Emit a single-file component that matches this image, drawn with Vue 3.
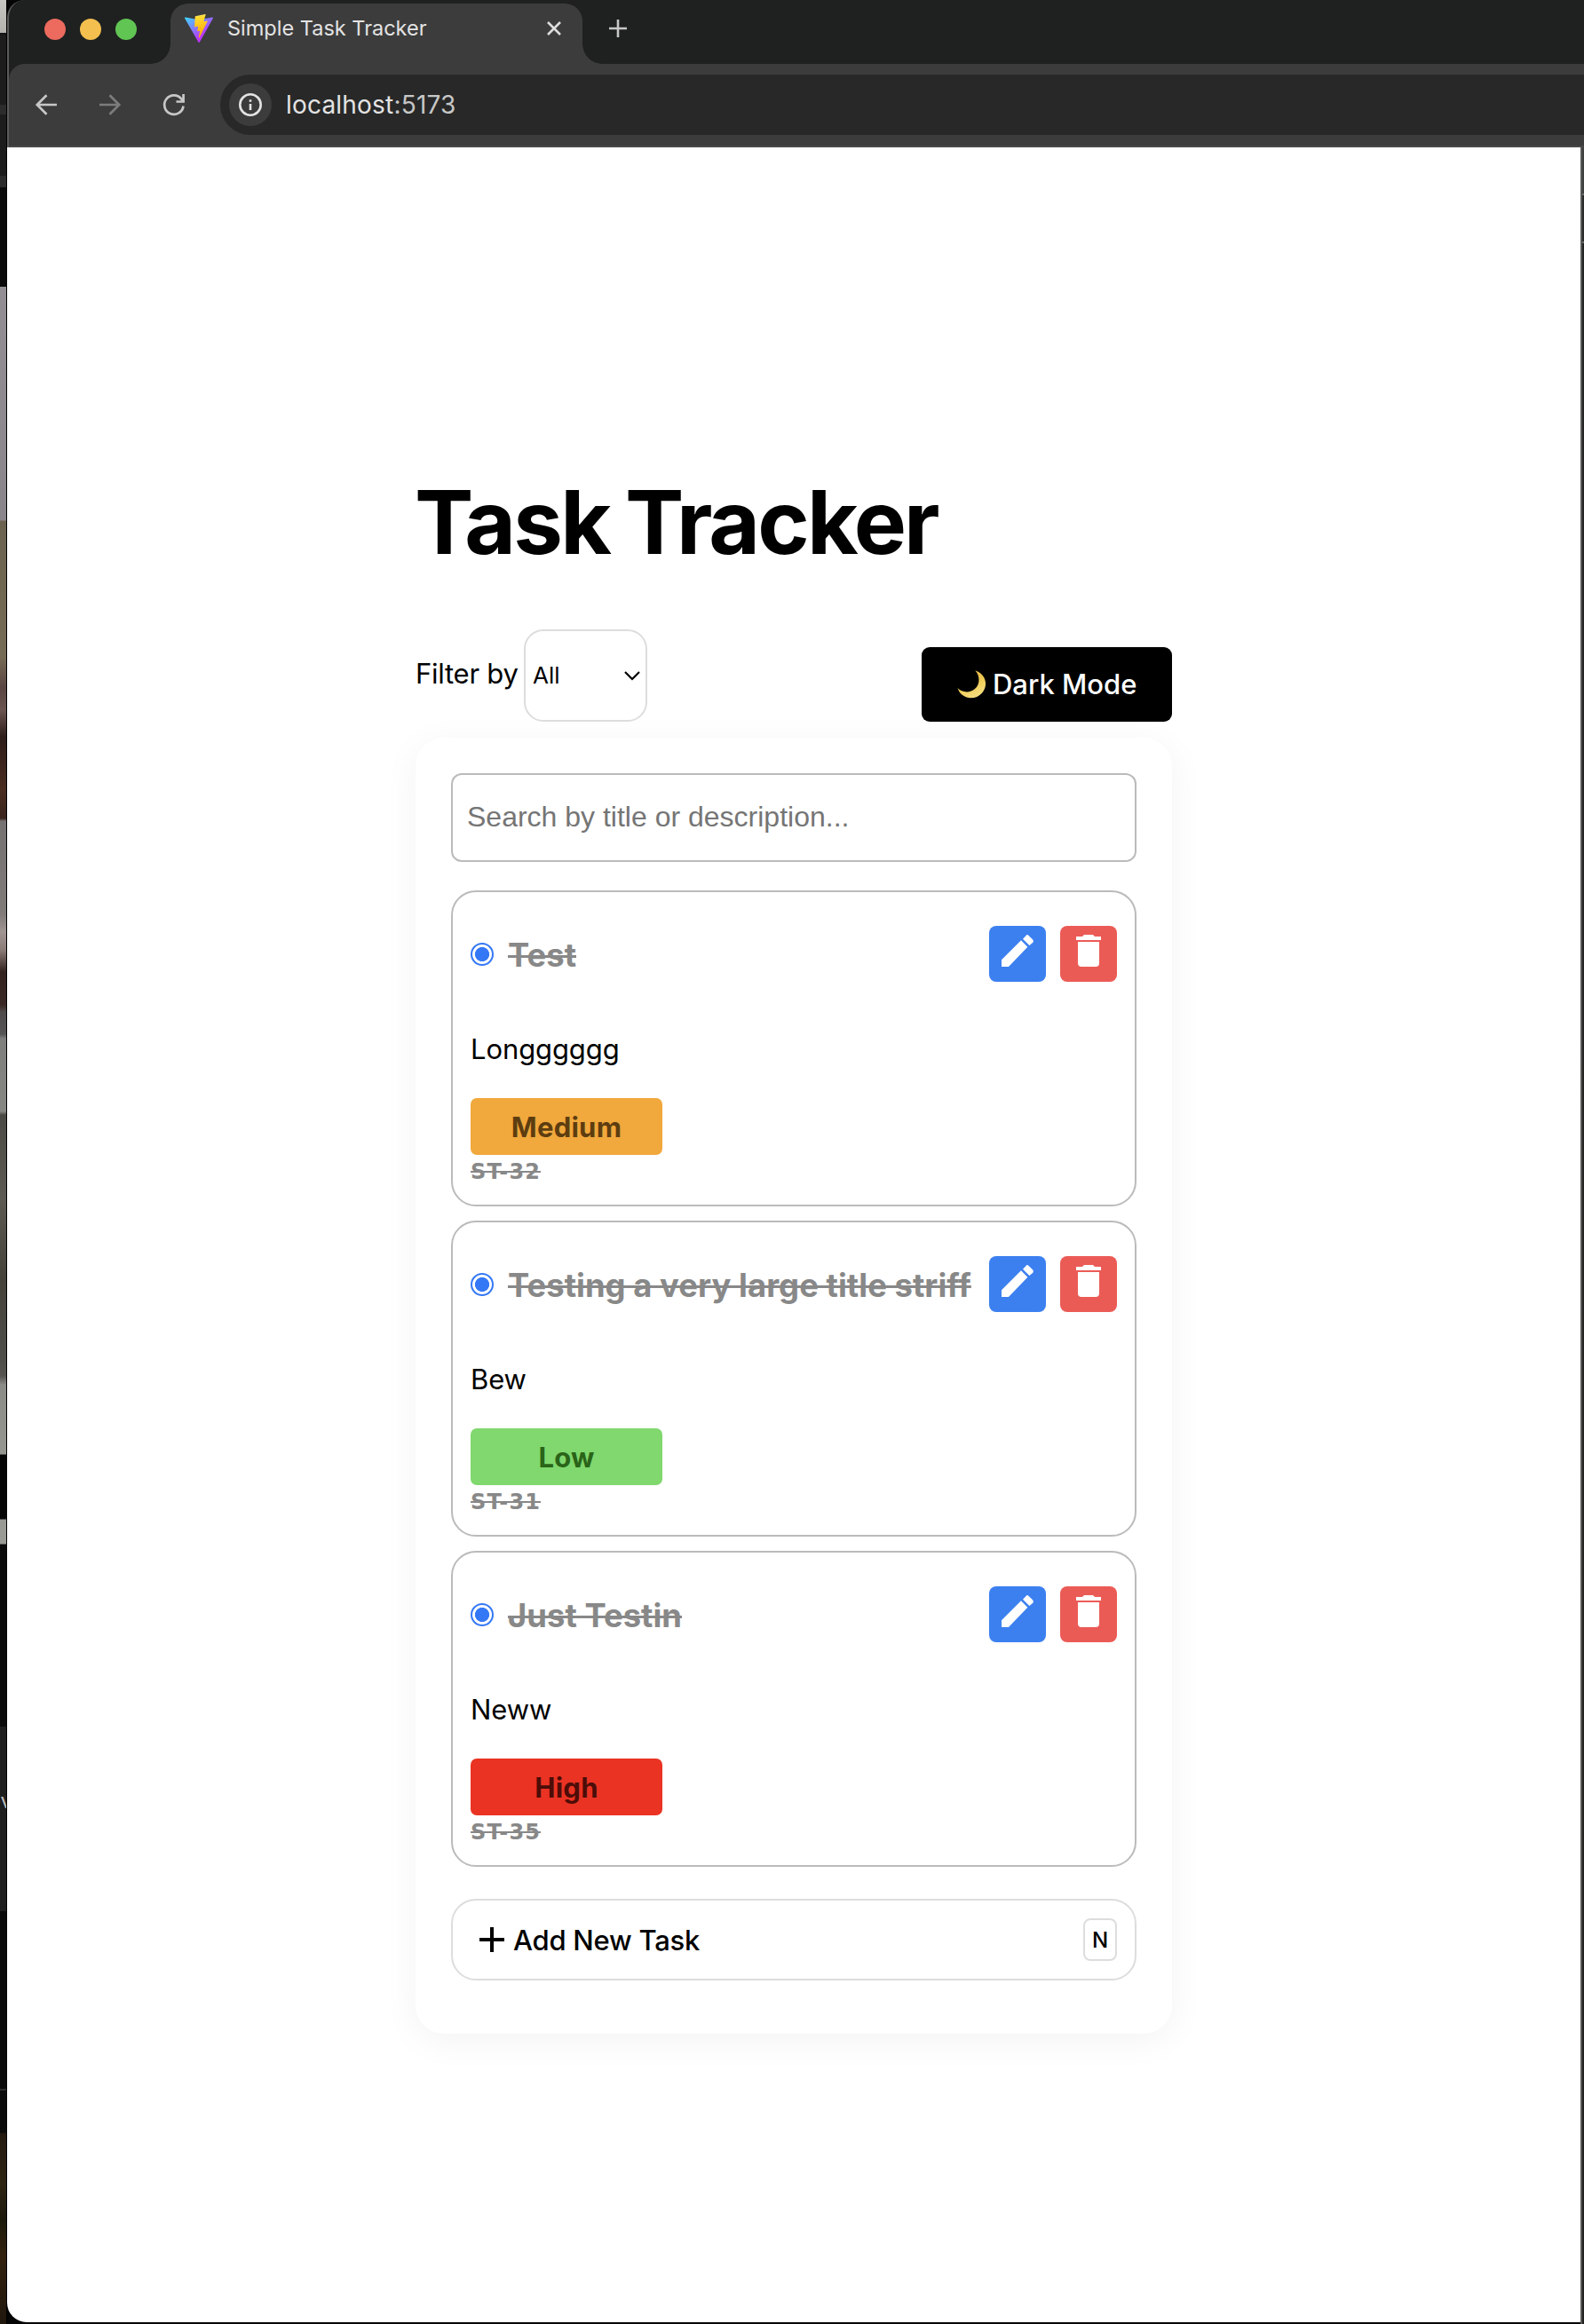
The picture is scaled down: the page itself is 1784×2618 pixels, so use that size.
<script setup>
import { ref } from 'vue'

const query = ref('')
const tasks = [
  { id: 'ST-32', title: 'Test', description: 'Longggggg', priority: 'Medium' },
  { id: 'ST-31', title: 'Testing a very large title striff', description: 'Bew', priority: 'Low' },
  { id: 'ST-35', title: 'Just Testin', description: 'Neww', priority: 'High' },
]
</script>

<template>
  <div class="desktop">
    <div class="backdrop-left"><span class="behind">ev</span></div>
    <div class="window">
      <header class="chrome">
        <div class="tabbar">
          <div class="lights"><i class="red"></i><i class="amber"></i><i class="green"></i></div>
          <div class="tab">
            <svg class="favicon" viewBox="0 0 256 257">
              <defs>
                <linearGradient id="vl" x1="-.8%" x2="57.6%" y1="7.7%" y2="78.4%">
                  <stop offset="0" stop-color="#41d1ff" /><stop offset="1" stop-color="#bd34fe" />
                </linearGradient>
                <linearGradient id="vb" x1="43.4%" x2="50.3%" y1="2.2%" y2="89%">
                  <stop offset="0" stop-color="#ffea83" /><stop offset=".08" stop-color="#ffdd35" /><stop offset="1" stop-color="#ffa800" />
                </linearGradient>
              </defs>
              <path fill="url(#vl)" d="M255.153 37.938L134.897 252.976c-2.483 4.44-8.862 4.466-11.382.048L.875 37.958c-2.746-4.814 1.371-10.646 6.827-9.67l120.385 21.517a6.537 6.537 0 0 0 2.322-.004l117.867-21.483c5.438-.991 9.574 4.796 6.877 9.62Z" />
              <path fill="url(#vb)" d="M185.432.063L96.44 17.501a3.268 3.268 0 0 0-2.634 3.014l-5.474 92.456a3.268 3.268 0 0 0 3.997 3.378l24.777-5.718c2.318-.535 4.413 1.507 3.936 3.838l-7.361 36.047c-.495 2.426 1.782 4.5 4.151 3.78l15.304-4.649c2.372-.72 4.652 1.36 4.15 3.788l-11.698 56.621c-.732 3.542 3.979 5.473 5.943 2.437l1.313-2.028l72.516-144.72c1.215-2.423-.88-5.186-3.54-4.672l-25.505 4.922c-2.396.462-4.435-1.77-3.759-4.114l16.646-57.705c.677-2.35-1.37-4.583-3.769-4.113Z" />
            </svg>
            <span class="tab-title">Simple Task Tracker</span>
            <svg class="close" viewBox="0 0 16 16"><path d="M1 1l14 14M15 1L1 15" /></svg>
          </div>
          <svg class="newtab" viewBox="0 0 20 20"><path d="M10 0v20M0 10h20" /></svg>
        </div>
        <div class="toolbar">
          <svg class="nav" viewBox="0 0 24 24"><path d="M24 12H2M12.5 1.2L1.8 12l10.700 10.800" /></svg>
          <svg class="nav dim" viewBox="0 0 24 24"><path d="M0 12h22M11.500 1.200L22.200 12L11.500 22.800" /></svg>
          <svg class="nav" viewBox="0 0 24 24"><path d="M22.500 13.500A10.700 10.700 0 1 1 20.500 5.800L22.500 8.300M22.600 0v8.500H14.500" /></svg>
          <div class="address">
            <span class="site-info">
              <svg viewBox="0 0 26 26"><circle cx="13" cy="13" r="11.700" /><path d="M13 12v7M13 7.200v2.500" /></svg>
            </span>
            <span class="url">localhost<span class="port">:5173</span></span>
          </div>
        </div>
      </header>

      <div class="viewport">
        <main class="page">
          <div class="app">
            <h1>Task Tracker</h1>
            <div class="controls">
              <label class="filter">
                <span>Filter by</span>
                <span class="select">
                  <span>All</span>
                  <svg viewBox="0 0 18 10"><path d="M1 1l8 8 8-8" /></svg>
                </span>
              </label>
              <button class="theme">
                <svg viewBox="54 41 96 97">
                  <defs>
                    <linearGradient id="moon" x1="0" y1="0" x2=".5" y2="1">
                      <stop offset="0" stop-color="#d9a93a" /><stop offset=".6" stop-color="#f0cb55" /><stop offset="1" stop-color="#f5dd7c" />
                    </linearGradient>
                  </defs>
                  <path fill="url(#moon)" d="M115 42C151 53 161 92 139 118C115 146 67 141 55 102C70 118 97 120 114 105C133 88 131 59 115 42Z" />
                </svg>
                <span>Dark Mode</span>
              </button>
            </div>

            <section class="board">
              <input v-model="query" class="search" placeholder="Search by title or description..." />
              <ul class="tasks">
                <li v-for="task in tasks" :key="task.id" class="task">
                  <div class="head">
                    <span class="radio"></span>
                    <h2>{{ task.title }}</h2>
                    <button class="icon edit">
                      <svg viewBox="0 0 192 189"><path d="M42 138V115L108 49L130 71L66 138ZM114 44L124 33.500Q128 28 133 32L147 46Q152 51 148 56L136 66Z" /></svg>
                    </button>
                    <button class="icon remove">
                      <svg viewBox="0 0 192 189"><path d="M54 36H75L81 30H111L117 36H138V48H54ZM60 54H132V126Q132 138 120 138H72Q60 138 60 126Z" /></svg>
                    </button>
                  </div>
                  <p class="description">{{ task.description }}</p>
                  <span class="priority" :class="task.priority.toLowerCase()">{{ task.priority }}</span>
                  <span class="id">{{ task.id }}</span>
                </li>
              </ul>
              <button class="add">
                <svg viewBox="0 0 28 28"><path d="M14 0v28M0 14h28" /></svg>
                <span>Add New Task</span>
                <kbd>N</kbd>
              </button>
            </section>
          </div>
        </main>
        <div class="backdrop-right"></div>
      </div>
    </div>
  </div>
</template>

<style>
body {
  background: #0a0a0a;
}
</style>

<style scoped>
* {
  box-sizing: border-box;
}
.desktop {
  display: flex;
  width: 1784px;
  height: 2618px;
  overflow: hidden;
  font-family: Inter, "Liberation Sans", sans-serif;
  color: #000;
  background: #050505;
}
.backdrop-left {
  width: 8px;
  flex: none;
  overflow: hidden;
  border-right: 1px solid #000;
  background: linear-gradient(
    #c8c6c0 0, #b4b2ad 37px, #111 37px, #1c1c1c 40px, #1c1c1c 118px, #2c2c2c 118px, #2c2c2c 129px,
    #1c1c1c 129px, #1c1c1c 198px, #2c2c2c 198px, #2c2c2c 211px, #0a0a0a 211px, #0a0a0a 323px,
    #938e94 323px, #8a858b 586px, #6b6350 587px, #766b55 740px, #5a4542 775px, #6b5450 800px,
    #2e1d1a 830px, #4a2c20 890px, #3a241c 922px, #767272 925px, #807b79 1030px, #a09592 1050px,
    #8c7c78 1070px, #33231f 1095px, #3a2824 1132px, #4f4b4a 1140px, #555 1165px, #7f7f7d 1170px,
    #868683 1252px, #4b4a44 1256px, #5c5a52 1350px, #45423a 1440px, #4e4d48 1530px, #555450 1550px,
    #8b8b87 1560px, #969691 1638px, #050505 1639px, #050505 1711px, #9a9a95 1712px, #9a9a95 1739px,
    #0a0a0a 1740px, #0a0a0a 1945px, #1e1e1e 1945px, #1e1e1e 2153px, #0a0a0a 2153px, #0a0a0a 2353px,
    #2c2c2c 2353px, #2c2c2c 2355px, #0a0a0a 2355px, #0a0a0a 2402px, #251a10 2404px, #2e2413 2460px,
    #1c1a0c 2500px, #33210f 2540px, #20170d 2618px
  );
}
.behind {
  display: block;
  margin: 2011px 0 0 -13px;
  font-size: 24px;
  line-height: 36px;
  color: #bbb;
}
.window {
  flex: 1;
  min-width: 0;
  display: flex;
  flex-direction: column;
}
.chrome {
  flex: none;
  height: 166px;
  background: #1f2120;
  border-left: 2px solid #5b5b5b;
  border-top-left-radius: 20px;
  overflow: hidden;
}
.tabbar {
  display: flex;
  height: 72px;
}
.lights {
  display: flex;
  gap: 16px;
  width: 182px;
  padding: 21px 0 0 40px;
}
.lights i {
  width: 24px;
  height: 24px;
  border-radius: 50%;
}
.red {
  background: #ec6a5e;
}
.amber {
  background: #f4bf4f;
}
.green {
  background: #61c554;
}
.tab {
  position: relative;
  display: flex;
  align-items: center;
  width: 464px;
  margin-top: 4px;
  padding: 0 24px 12px 16px;
  background: #3c3c3c;
  border-radius: 20px 20px 0 0;
}
.tab::before,
.tab::after {
  content: "";
  position: absolute;
  bottom: 0;
  width: 22px;
  height: 22px;
}
.tab::before {
  left: -22px;
  background: radial-gradient(circle at 0 0, transparent 21.500px, #3c3c3c 22px);
}
.tab::after {
  right: -22px;
  background: radial-gradient(circle at 100% 0, transparent 21.500px, #3c3c3c 22px);
}
.favicon {
  width: 32px;
  height: 32px;
}
.tab-title {
  flex: 1;
  margin-left: 16px;
  padding-bottom: 2px;
  font-size: 23.500px;
  color: #e3e3e3;
  white-space: nowrap;
}
.close {
  width: 16px;
  height: 16px;
}
.close path,
.newtab path {
  stroke: #dcdcdc;
  stroke-width: 2.600;
}
.newtab {
  width: 20px;
  height: 20px;
  margin: 22px 0 0 30px;
}
.newtab path {
  stroke: #c7c7c7;
}
.toolbar {
  display: flex;
  align-items: center;
  height: 94px;
  padding: 0 0 2px 30px;
  background: #3c3c3c;
  border-bottom: 2px solid #494646;
  border-top-left-radius: 18px;
}
.nav {
  flex: none;
  width: 24px;
  height: 24px;
  margin: 2px 48px 0 0;
  overflow: visible;
}
.nav path {
  fill: none;
  stroke: #c7c7c7;
  stroke-width: 2.700;
}
.dim path {
  stroke: #7c7c7c;
}
.address {
  display: flex;
  align-items: center;
  flex: 1;
  height: 68px;
  margin: 2px 0 0 -8px;
  padding-left: 10px;
  background: #282828;
  border-radius: 34px 0 0 34px;
}
.site-info {
  display: grid;
  place-items: center;
  width: 48px;
  height: 48px;
  border-radius: 50%;
  background: #3c3c3c;
}
.site-info svg {
  width: 26px;
  height: 26px;
}
.site-info circle,
.site-info path {
  fill: none;
  stroke: #e3e3e3;
  stroke-width: 2.600;
}
.url {
  margin-left: 16px;
  font-size: 28px;
  letter-spacing: 0.200px;
  color: #e3e3e3;
}
.port {
  color: #c7c7c7;
}
.viewport {
  display: flex;
  flex: 1;
}
.page {
  width: 1772px;
  height: 2450px;
  padding-left: 460px;
  background: #fff;
  border-bottom-left-radius: 22px;
}
.backdrop-right {
  flex: 1;
  border-left: 2px solid #555756;
  background: linear-gradient(
    #3e403f 52px, #6a6c6b 52px, #6a6c6b 54px, #2a2c2b 54px, #2a2c2b 106px,
    #6a6c6b 106px, #6a6c6b 108px, #222423 108px, #242220 2452px
  );
}
.app {
  width: 852px;
  padding-top: 366px;
}
h1 {
  margin: 0 0 65px;
  font-size: 99.500px;
  line-height: 112px;
  font-weight: 700;
  letter-spacing: -2.800px;
  word-spacing: -3px;
  text-indent: -1px;
}
.controls {
  display: flex;
  justify-content: space-between;
  align-items: flex-end;
  height: 104px;
}
.filter {
  display: flex;
  align-items: center;
  font-size: 31px;
}
.filter > span:first-child {
  width: 122px;
  padding-bottom: 6px;
  letter-spacing: -0.250px;
  white-space: nowrap;
}
.select {
  display: flex;
  align-items: center;
  justify-content: space-between;
  width: 139px;
  height: 104px;
  padding: 0 6px 0 8px;
  border: 2px solid #ddd;
  border-radius: 22px;
  font-size: 26px;
}
.select span {
  padding-bottom: 2px;
}
.select svg {
  width: 18px;
  height: 10px;
  overflow: visible;
}
.select path {
  fill: none;
  stroke: #000;
  stroke-width: 2.200;
}
button {
  font-family: inherit;
  border: 0;
  padding: 0;
}
.theme {
  display: flex;
  align-items: center;
  gap: 8px;
  width: 282px;
  height: 84px;
  padding-left: 40px;
  border-radius: 9px;
  background: #000;
  color: #fff;
  font-size: 31px;
  font-weight: 500;
}
.theme svg {
  width: 32px;
  height: 32px;
}
.theme span {
  padding-bottom: 2px;
}
.board {
  margin-top: 18px;
  padding: 40px 40px 60px;
  border-radius: 32px;
  background: #fff;
  box-shadow: 0 8px 40px rgba(0, 0, 0, 0.050);
}
.search {
  display: block;
  width: 772px;
  height: 100px;
  padding: 0 16px 2px;
  border: 2px solid #bbb;
  border-radius: 12px;
  background: #fff;
  font: 32px "Liberation Sans", sans-serif;
}
.search::placeholder {
  color: #757575;
  opacity: 1;
}
.tasks {
  display: flex;
  flex-direction: column;
  gap: 16px;
  margin: 32px 0 36px;
  padding: 0;
  list-style: none;
}
.task {
  height: 356px;
  padding: 38px 20px 0;
  border: 2px solid #bbb;
  border-radius: 28px;
  background: #fff;
}
.head {
  display: flex;
  align-items: center;
  height: 63px;
}
.radio {
  width: 26px;
  height: 26px;
  border: 2.500px solid #3478f6;
  border-radius: 50%;
  background: radial-gradient(circle, #3478f6 7.700px, #fff 8.400px);
}
h2 {
  flex: 1;
  margin: 2px 0 0 16px;
  font-size: 36.400px;
  line-height: 44px;
  font-weight: 700;
  letter-spacing: 0.040px;
  color: #888;
  text-decoration: line-through;
  white-space: nowrap;
}
.icon {
  width: 64px;
  height: 63px;
  margin-left: 16px;
  border-radius: 8px;
  flex: none;
}
.icon svg {
  display: block;
  width: 64px;
  height: 63px;
  fill: #fff;
}
.edit {
  background: #3c80f0;
}
.remove {
  background: #eb5b56;
}
.description {
  margin: 56px 0 35px 0;
  font-size: 31px;
  line-height: 40px;
  letter-spacing: -0.100px;
}
.priority {
  display: block;
  width: 216px;
  height: 64px;
  border-radius: 7px;
  font-size: 31px;
  line-height: 66px;
  font-weight: 700;
  letter-spacing: 0.250px;
  text-align: center;
}
.medium {
  background: #f1a83c;
  color: #5d3d10;
}
.low {
  background: #80d86e;
  color: #2a6418;
}
.high {
  background: #ea3323;
  color: #4c0d08;
}
.id {
  display: block;
  width: max-content;
  font: 700 24px/39px "DejaVu Sans", sans-serif;
  letter-spacing: 1.100px;
  color: #888;
  text-decoration: line-through;
}
.add {
  display: flex;
  align-items: center;
  width: 772px;
  height: 92px;
  padding: 0 20px 0 30px;
  border: 2px solid #ddd;
  border-radius: 28px;
  background: #fff;
  font-size: 31px;
  font-weight: 500;
  color: #000;
}
.add svg {
  width: 28px;
  height: 28px;
}
.add path {
  stroke: #000;
  stroke-width: 4;
}
.add span {
  flex: 1;
  margin-left: 10px;
  text-align: left;
  letter-spacing: -0.250px;
}
kbd {
  width: 38px;
  height: 48px;
  border: 2px solid #ddd;
  border-radius: 8px;
  font: 500 24px/46px Inter, sans-serif;
  text-align: center;
}
</style>
